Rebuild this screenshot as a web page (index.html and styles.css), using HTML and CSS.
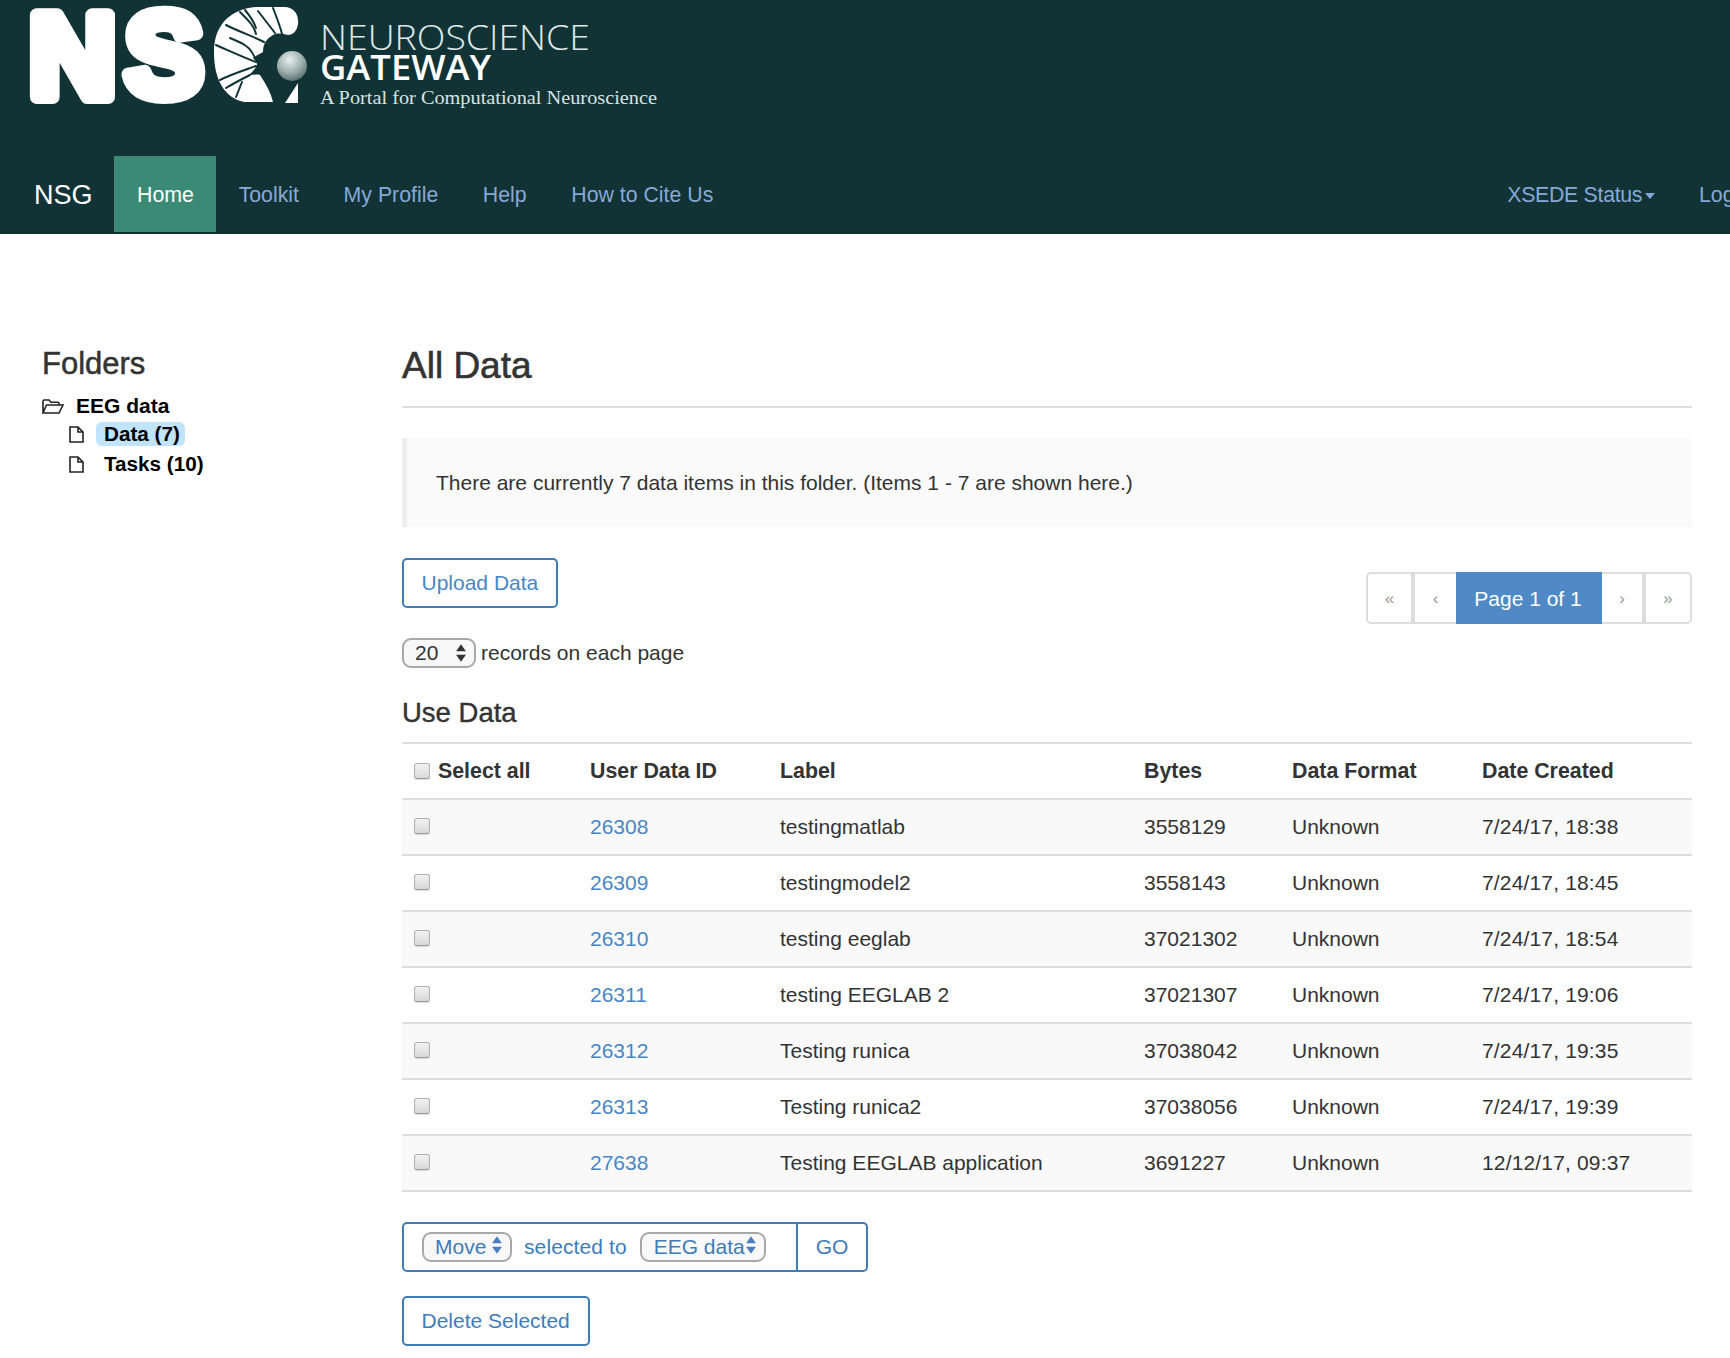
FILE: index.html
```html
<!DOCTYPE html>
<html lang="en">
<head>
<meta charset="utf-8">
<title>Neuroscience Gateway - All Data</title>
<link rel="stylesheet" href="styles.css">
</head>
<body>
<header class="site-header">
  <div class="logo-bar">
    <svg class="logo" width="700" height="156" viewBox="0 0 700 156">
      <defs>
        <radialGradient id="ball" cx="0.42" cy="0.3" r="0.75">
          <stop offset="0" stop-color="#e8eeec"/>
          <stop offset="0.55" stop-color="#9fb0ad"/>
          <stop offset="1" stop-color="#4f6a68"/>
        </radialGradient>
      </defs>
      <text class="logo-ns" x="29" y="97" textLength="87" lengthAdjust="spacingAndGlyphs">N</text>
      <text class="logo-ns" x="125" y="96" textLength="78" lengthAdjust="spacingAndGlyphs">S</text>
      <path class="logo-c" d="M214 52C214 24 232 8 258 7L284 7C295 7 299 16 298 24C297 31 293 35 288 35C283 34 278 32 273 35C268 38 263 42 263 52C259 55 254 56 253 58C256 61 257 63 257 65C255 70 251 73 249 75C254 75 258 74 260 75C266 84 271 93 273 102L244 102C226 98 214 82 214 52Z"/>
      <path class="logo-c" d="M285 103L298 83V103Z"/>
      <g class="logo-veins">
        <path d="M240 12C250 22 254 26 256 34"/>
        <path d="M245 10C250 16 254 22 256 28"/>
        <path d="M258 11L275 33"/>
        <path d="M273 8C277 18 280 26 282 34"/>
        <path d="M226 25C240 32 252 36 264 42"/>
        <path d="M230 38C240 42 250 46 254 56"/>
        <path d="M216 45C232 52 245 58 256 62"/>
        <path d="M220 80C232 74 245 70 256 66"/>
        <path d="M226 88C236 82 244 78 250 75"/>
        <path d="M236 97L242 82"/>
      </g>
      <circle cx="292" cy="66" r="15" fill="url(#ball)"/>
      <text class="logo-neuro" x="320" y="50" textLength="270" lengthAdjust="spacingAndGlyphs">NEUROSCIENCE</text>
      <text class="logo-gate" x="320" y="80" textLength="171" lengthAdjust="spacingAndGlyphs">GATEWAY</text>
      <text class="logo-tag" x="320" y="104" textLength="337" lengthAdjust="spacingAndGlyphs">A Portal for Computational Neuroscience</text>
    </svg>
  </div>
  <nav class="navbar">
    <a class="brand" href="#">NSG</a>
    <a class="nav-link active" href="#">Home</a>
    <a class="nav-link" href="#">Toolkit</a>
    <a class="nav-link" href="#">My Profile</a>
    <a class="nav-link" href="#">Help</a>
    <a class="nav-link" href="#">How to Cite Us</a>
    <div class="nav-right">
      <a class="nav-link nav-status" href="#">XSEDE Status<span class="caret"></span></a>
      <a class="nav-link" href="#">Logout</a>
    </div>
  </nav>
</header>

<main class="layout">
  <aside class="sidebar">
    <h2 class="folders-title">Folders</h2>
    <ul class="tree">
      <li class="tree-root">
        <svg class="ico-folder" width="22" height="15" viewBox="0 0 22 15"><path d="M1 14V2.2C1 1.5 1.5 1 2.2 1H7L9 3.2H16C16.6 3.2 17 3.6 17 4.2V6M1 14L4.5 6H21L17 14Z"/></svg>
        <a href="#">EEG data</a>
      </li>
      <li class="tree-leaf">
        <svg class="ico-file" width="15" height="17" viewBox="0 0 15 17"><path d="M1 1H9L14 6V16H1ZM9 1V6H14"/></svg>
        <a class="selected" href="#">Data (7)</a>
      </li>
      <li class="tree-leaf">
        <svg class="ico-file" width="15" height="17" viewBox="0 0 15 17"><path d="M1 1H9L14 6V16H1ZM9 1V6H14"/></svg>
        <a href="#">Tasks (10)</a>
      </li>
    </ul>
  </aside>

  <section class="content">
    <h1 class="page-title">All Data</h1>
    <div class="callout">There are currently 7 data items in this folder. (Items 1 - 7 are shown here.)</div>

    <div class="tools">
      <div class="tools-left">
        <a class="btn" href="#">Upload Data</a>
        <div class="per-page">
          <span class="sel sel-plain"><select><option>20</option></select><svg class="updown" viewBox="0 0 11 18"><path d="M5.5 1L10 7.5H1ZM5.5 17L1 10.5H10Z"/></svg></span>
          <span>records on each page</span>
        </div>
      </div>
      <ul class="pager">
        <li><a href="#">«</a></li>
        <li><a href="#">‹</a></li>
        <li class="current"><a href="#">Page 1 of 1</a></li>
        <li><a href="#">›</a></li>
        <li><a href="#">»</a></li>
      </ul>
    </div>

    <h3 class="use-title">Use Data</h3>
    <table class="data">
      <thead>
        <tr>
          <th><label class="select-all"><input type="checkbox"> Select all</label></th>
          <th>User Data ID</th><th>Label</th><th>Bytes</th><th>Data Format</th><th>Date Created</th>
        </tr>
      </thead>
      <tbody>
        <tr><td><input type="checkbox"></td><td><a href="#">26308</a></td><td>testingmatlab</td><td>3558129</td><td>Unknown</td><td>7/24/17, 18:38</td></tr>
        <tr><td><input type="checkbox"></td><td><a href="#">26309</a></td><td>testingmodel2</td><td>3558143</td><td>Unknown</td><td>7/24/17, 18:45</td></tr>
        <tr><td><input type="checkbox"></td><td><a href="#">26310</a></td><td>testing eeglab</td><td>37021302</td><td>Unknown</td><td>7/24/17, 18:54</td></tr>
        <tr><td><input type="checkbox"></td><td><a href="#">26311</a></td><td>testing EEGLAB 2</td><td>37021307</td><td>Unknown</td><td>7/24/17, 19:06</td></tr>
        <tr><td><input type="checkbox"></td><td><a href="#">26312</a></td><td>Testing runica</td><td>37038042</td><td>Unknown</td><td>7/24/17, 19:35</td></tr>
        <tr><td><input type="checkbox"></td><td><a href="#">26313</a></td><td>Testing runica2</td><td>37038056</td><td>Unknown</td><td>7/24/17, 19:39</td></tr>
        <tr><td><input type="checkbox"></td><td><a href="#">27638</a></td><td>Testing EEGLAB application</td><td>3691227</td><td>Unknown</td><td>12/12/17, 09:37</td></tr>
      </tbody>
    </table>

    <form class="move-form">
      <div class="move-main">
        <span class="sel sel-move"><select><option>Move</option></select><svg class="updown blue" viewBox="0 0 11 18"><path d="M5.5 1L10 7.5H1ZM5.5 17L1 10.5H10Z"/></svg></span>
        <span class="move-text">selected to</span>
        <span class="sel sel-folder"><select><option>EEG data</option></select><svg class="updown blue" viewBox="0 0 11 18"><path d="M5.5 1L10 7.5H1ZM5.5 17L1 10.5H10Z"/></svg></span>
      </div>
      <a class="go" href="#">GO</a>
    </form>
    <a class="btn btn-delete" href="#">Delete Selected</a>
  </section>
</main>
</body>
</html>
```
FILE: styles.css
```css
* { box-sizing: border-box; }
html, body { margin: 0; padding: 0; overflow-x: hidden; }
body {
  width: 1730px;
  height: 1358px;
  overflow: hidden;
  font-family: "Liberation Sans", Arial, sans-serif;
  font-size: 21px;
  line-height: 30px;
  color: #333;
  background: #fff;
}
a { color: #4a86c5; text-decoration: none; }

/* header */
.site-header { background: #123336; height: 234px; }
.logo-bar { height: 156px; }
.logo { display: block; }
.logo-ns { font: bold 118px "Liberation Sans", sans-serif; fill: #fff; stroke: #fff; stroke-width: 14px; stroke-linejoin: round; }
.logo-c { fill: #fff; }
.logo-veins path { fill: none; stroke: #123336; stroke-width: 2px; stroke-linecap: round; }
.logo-neuro { font: 300 34px "Open Sans", sans-serif; fill: #dfe8e8; }
.logo-gate { font: 600 34px "Open Sans", sans-serif; fill: #fff; }
.logo-tag { font: 19px "Liberation Serif", serif; fill: #d8e2e2; }

.navbar { display: flex; width: 1800px; height: 76px; align-items: stretch; font-size: 21.3px; }
.brand { color: #fff; font-size: 27px; line-height: 79px; padding: 0 21px 0 34px; }
.nav-link { color: #86a9d6; line-height: 79px; padding: 0 22.3px; white-space: nowrap; }
.nav-link.active { background: #3a8a76; color: #fff; padding: 0 22.5px 0 23.5px; }
.nav-status { letter-spacing: -0.3px; padding-right: 21.5px; }
.nav-right { display: flex; flex: none; margin-left: auto; width: 315px; }
.caret {
  display: inline-block;
  margin-left: 3px;
  vertical-align: middle;
  border-top: 6px solid #86a9d6;
  border-left: 5.5px solid transparent;
  border-right: 5.5px solid transparent;
}

/* layout */
.layout { display: grid; grid-template-columns: 360px 1290px; padding: 110px 0 0 42px; }

.folders-title { margin: 0; font-size: 31px; line-height: 40px; font-weight: normal; -webkit-text-stroke: 0.5px #333; }
.tree { list-style: none; margin: 9px 0 0; padding: 0; color: #000; font-weight: bold; font-size: 21px; }
.tree a { color: #000; }
.tree-root { display: flex; align-items: center; height: 26px; gap: 12px; }
.tree-leaf { display: flex; align-items: center; height: 30px; margin-left: 27px; gap: 12px; font-size: 20.7px; }
.tree-leaf a { padding: 0 5px 0 8px; line-height: 24px; height: 24px; border-radius: 6px; }
.tree-leaf .selected { background: #bfe4fb; }
.ico-folder, .ico-file { fill: none; stroke: #222; stroke-width: 1.6px; flex: none; }

.page-title { margin: 0; font-size: 37px; line-height: 44px; font-weight: normal; -webkit-text-stroke: 0.6px #333; padding-bottom: 18px; border-bottom: 2px solid #ddd; }
.callout {
  margin-top: 30px;
  height: 89px;
  padding: 30px 29px 0;
  background: #fafafa;
  border-left: 5px solid #eee;
}

.tools { display: flex; justify-content: space-between; align-items: flex-start; margin-top: 31px; }
.btn {
  display: inline-block;
  height: 50px;
  line-height: 46px;
  padding: 0 17.5px;
  border: 2px solid #3f7cb7;
  border-radius: 5px;
  background: #fff;
}
.per-page { display: flex; align-items: center; gap: 5px; margin-top: 30px; height: 30px; }

.sel { position: relative; display: inline-block; }
.sel select {
  appearance: none;
  -webkit-appearance: none;
  display: block;
  font: inherit;
  color: inherit;
  background: #f8f8f8;
  border: 2px solid #a8a8a8;
  border-radius: 9px;
  height: 30px;
  line-height: 26px;
  margin: 0;
  outline: none;
}
.sel-plain select { width: 74px; padding: 0 0 0 11px; color: #333; }
.updown { position: absolute; top: 5px; right: 9px; width: 12px; height: 20px; fill: #333; }
.updown.blue { fill: #4a7fbe; top: 3px; }

.pager { display: flex; list-style: none; margin: 14px 0 0; padding: 0; height: 52px; }
.pager li { height: 52px; }
.pager a {
  display: block;
  height: 52px;
  width: 47px;
  line-height: 50px;
  text-align: center;
  color: #999;
  font-size: 17px;
  background: #fff;
  border: 2px solid #ddd;
  border-left-width: 0;
}
.pager li:first-child a { border-left-width: 2px; border-radius: 5px 0 0 5px; }
.pager li:nth-child(2) a { width: 43px; border-right-width: 0; border-left-width: 2px; }
.pager li:nth-child(4) a { width: 44px; border-left-width: 0; border-right-width: 4px; }
.pager li:last-child a { width: 46px; border-radius: 0 5px 5px 0; }
.pager .current a {
  width: 146px;
  background: #508ac6;
  border-color: #508ac6;
  color: #fff;
  font-size: 21px;
  line-height: 50px;
}

.use-title { margin: 30px 0 14px; font-size: 27.5px; line-height: 30px; font-weight: normal; -webkit-text-stroke: 0.4px #333; }

.data { width: 1290px; border-collapse: collapse; table-layout: fixed; border-top: 2px solid #ddd; }
.data th, .data td { padding: 0 12px; height: 56px; text-align: left; vertical-align: middle; border-bottom: 2px solid #ddd; white-space: nowrap; }
.data th { font-size: 21.35px; }
.data th:nth-child(1) { width: 176px; }
.data th:nth-child(2) { width: 190px; }
.data th:nth-child(3) { width: 364px; }
.data th:nth-child(4) { width: 148px; }
.data th:nth-child(5) { width: 190px; }
.data td:nth-child(6) { letter-spacing: 0.16px; }
.data td input[type="checkbox"] { margin-top: -2px; }
.data tbody tr:nth-child(odd) { background: #f9f9f9; }
.select-all { display: flex; align-items: center; gap: 8px; }

input[type="checkbox"] {
  appearance: none;
  -webkit-appearance: none;
  display: block;
  flex: none;
  width: 16px;
  height: 16px;
  margin: 0;
  border: 1px solid #b0b0b0;
  border-bottom-color: #999;
  border-radius: 3px;
  background: linear-gradient(#f2f2f2, #d9d9d9);
  box-shadow: 0 1px 1px rgba(0,0,0,0.15);
}

.move-form {
  display: flex;
  width: 466px;
  height: 50px;
  margin-top: 30px;
  color: #3f7cb7;
  border: 2px solid #3f7cb7;
  border-radius: 5px;
}
.move-main { display: flex; align-items: center; width: 394px; padding-left: 18px; border-right: 2px solid #3f7cb7; }
.move-text { margin: 0 13px 0 12px; letter-spacing: 0.1px; }
.sel-move select { width: 90px; padding: 0 0 0 11px; color: #3f7cb7; }
.sel-folder select { width: 126px; padding: 0 0 0 12px; color: #3f7cb7; }
.go { flex: 1; text-align: center; line-height: 46px; color: #3f7cb7; }
.btn-delete { margin-top: 24px; width: 188px; color: #3f7cb7; white-space: nowrap; }
```
